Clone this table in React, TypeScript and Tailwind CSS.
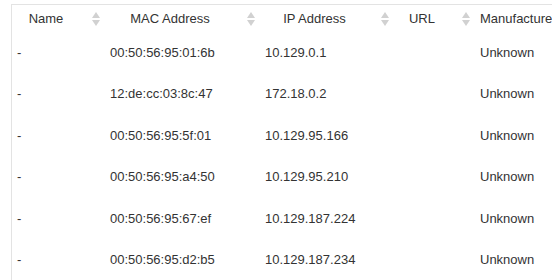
import { memo } from 'react'

interface Device {
  name: string
  mac: string
  ip: string
  url: string
  manufacturer: string
}

const devices: Device[] = [
  { name: '-', mac: '00:50:56:95:01:6b', ip: '10.129.0.1', url: '', manufacturer: 'Unknown' },
  { name: '-', mac: '12:de:cc:03:8c:47', ip: '172.18.0.2', url: '', manufacturer: 'Unknown' },
  { name: '-', mac: '00:50:56:95:5f:01', ip: '10.129.95.166', url: '', manufacturer: 'Unknown' },
  { name: '-', mac: '00:50:56:95:a4:50', ip: '10.129.95.210', url: '', manufacturer: 'Unknown' },
  { name: '-', mac: '00:50:56:95:67:ef', ip: '10.129.187.224', url: '', manufacturer: 'Unknown' },
  { name: '-', mac: '00:50:56:95:d2:b5', ip: '10.129.187.234', url: '', manufacturer: 'Unknown' },
]

const columns = [
  { label: 'Name', width: 'w-[93px]', align: 'text-center' },
  { label: 'MAC Address', width: 'w-[155px]', align: 'text-center' },
  { label: 'IP Address', width: 'w-[134px]', align: 'text-center' },
  { label: 'URL', width: 'w-[81px]', align: 'text-center' },
  // too wide for its cell, so it runs out from the left edge
  { label: 'Manufacturer', width: 'w-[120px]', align: 'text-left' },
]

// Up/down caret pair shown on every sortable header
const SortCaret = () => (
  <svg width="8" height="14" viewBox="0 0 8 14" className="absolute right-[5px] top-[7px]">
    <path d="M4 0 L8 6 L0 6 Z" fill="#d1d1d1" />
    <path d="M0 8 L8 8 L4 14 Z" fill="#d1d1d1" />
  </svg>
)

const DeviceTable = memo(() => {
  return (
    <div className="ml-[11px] mt-[4px] border-l border-t border-[#e3e3e3] w-[583px]">
      <table className="table-fixed border-collapse w-[583px] text-[13px] text-[#333333]">
        <thead>
          <tr className="h-[27px]">
            {columns.map((col) => (
              <th
                key={col.label}
                className={`${col.width} ${col.align} relative pl-[5px] pr-[30px] font-normal whitespace-nowrap`}
              >
                {col.label}
                <SortCaret />
              </th>
            ))}
          </tr>
        </thead>
        <tbody>
          {devices.map((d) => (
            <tr key={d.mac} className="h-[41.4px]">
              <td className="pl-[5px] text-left">{d.name}</td>
              <td className="pl-[5px] text-left">{d.mac}</td>
              <td className="pl-[5px] text-left">{d.ip}</td>
              <td className="pl-[5px] text-left">{d.url}</td>
              <td className="pl-[5px] text-left whitespace-nowrap">{d.manufacturer}</td>
            </tr>
          ))}
        </tbody>
      </table>
    </div>
  )
})

export default function App() {
  return (
    <div className="w-[552px] h-[280px] overflow-hidden bg-white font-['Liberation_Sans',Arial,sans-serif]">
      <DeviceTable />
    </div>
  )
}
